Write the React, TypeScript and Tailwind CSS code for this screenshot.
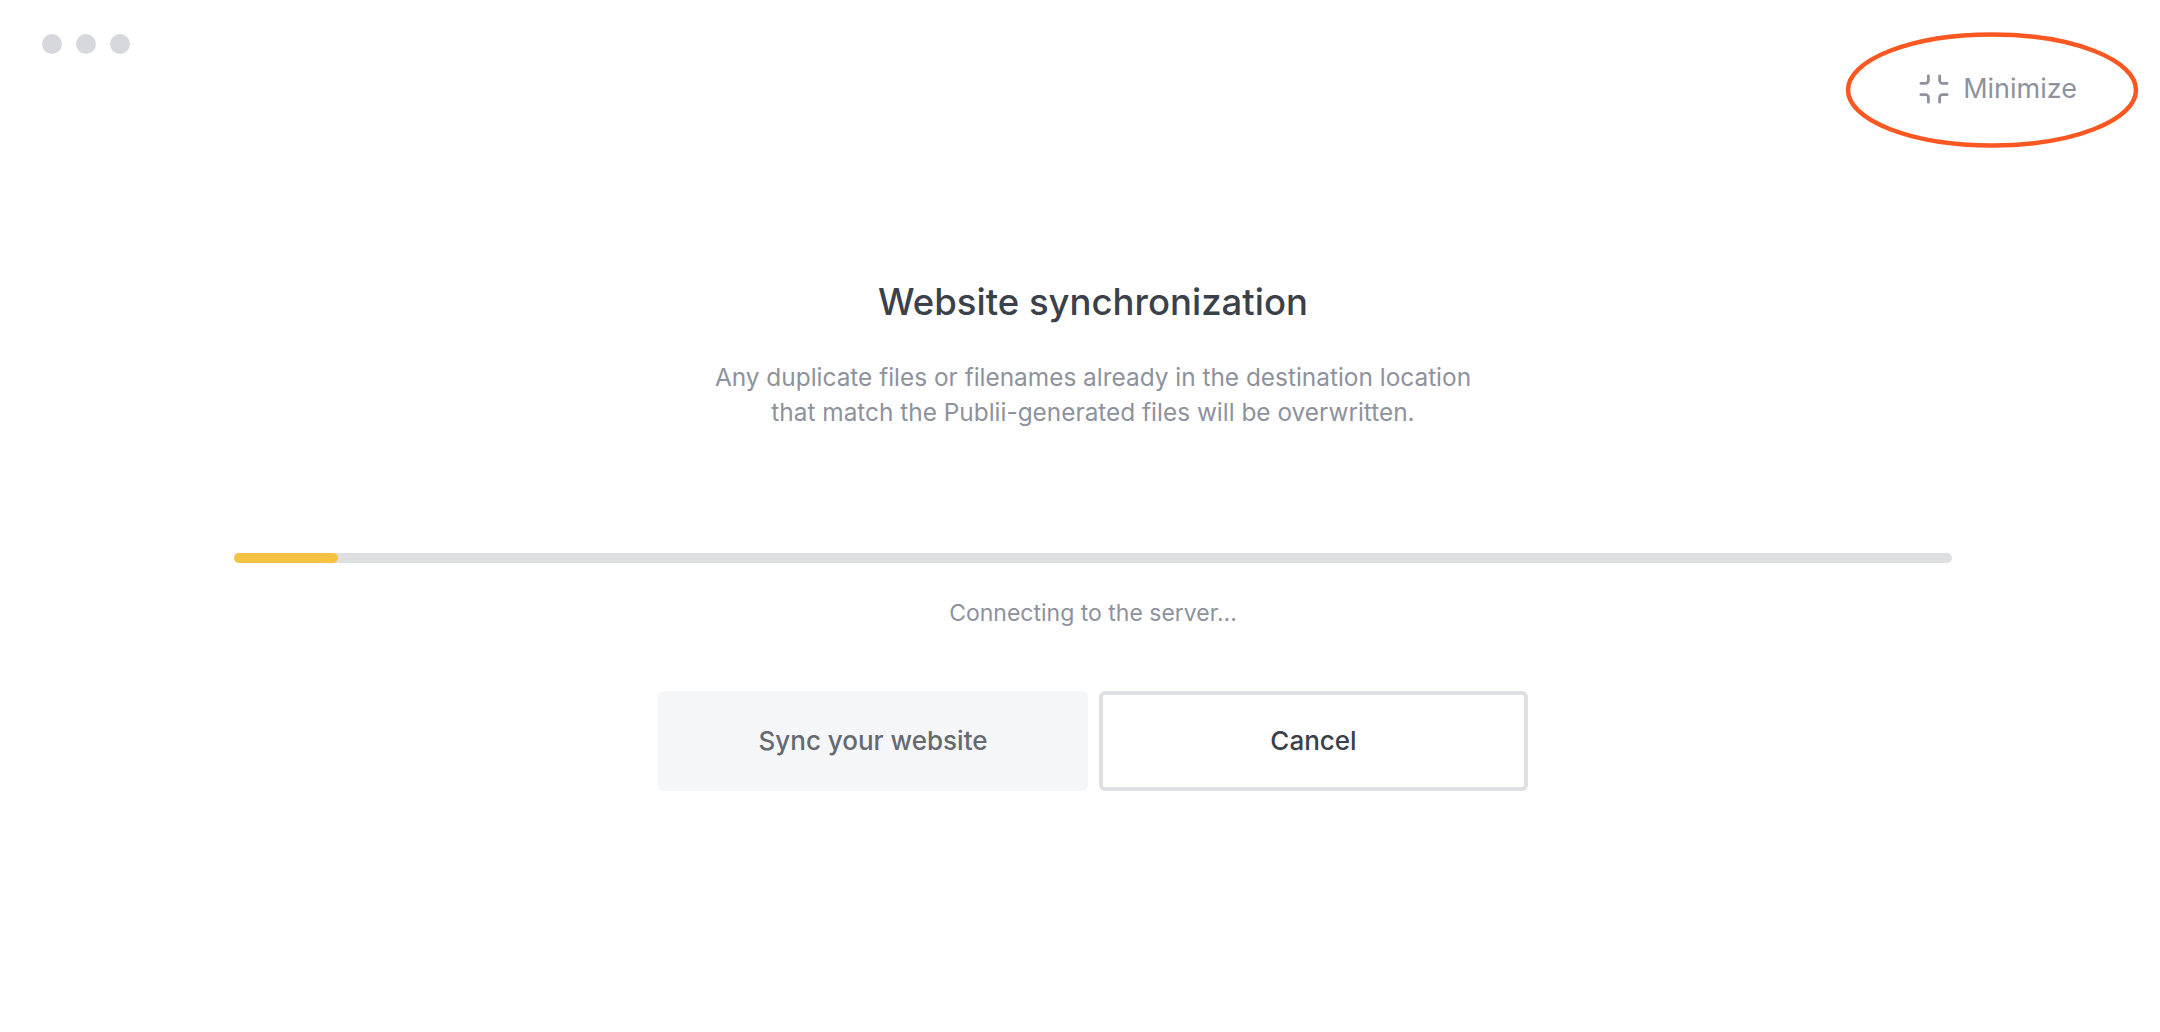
import React from "react";

const App: React.FC = () => (
  <div className="relative h-[1032px] overflow-hidden bg-white font-['Inter',sans-serif] text-[#8e929d]">
    {/* Window controls + minimize */}
    <header className="flex h-[170px] items-start justify-between pl-[42px] pr-[60px]">
      <div className="mt-[34px] flex gap-[14px]">
        <span className="h-5 w-5 rounded-full bg-[#d7d8dd]" />
        <span className="h-5 w-5 rounded-full bg-[#d7d8dd]" />
        <span className="h-5 w-5 rounded-full bg-[#d7d8dd]" />
      </div>
      <button className="mr-[23px] mt-[72px] flex items-center gap-[14px] text-[27px] leading-[34px]">
        <svg width="30" height="30" viewBox="0 0 32 32" fill="none" stroke="#8e929d" strokeWidth="3" strokeLinecap="round">
          <path d="M10 2v5a3 3 0 0 1-3 3H2" />
          <path d="M22 2v5a3 3 0 0 0 3 3h5" />
          <path d="M10 30v-5a3 3 0 0 0-3-3H2" />
          <path d="M22 30v-5a3 3 0 0 1 3-3h5" />
        </svg>
        Minimize
      </button>
    </header>

    <main className="flex flex-col items-center pl-[26px]">
      <h1 className="mt-[108px] text-[36.5px] font-medium leading-[48px] text-[#3a414a]">Website synchronization</h1>
      <p className="mt-[34px] text-center text-[24.4px] leading-[34.5px]">
        Any duplicate files or filenames already in the destination location
        <br />
        that match the Publii-generated files will be overwritten.
      </p>

      <div className="mt-[124px] h-[10px] w-[1718px] rounded-[5px] bg-[#dedfe3]">
        <div className="h-full w-[104px] rounded-[5px] bg-[#f6c244]" />
      </div>
      <p className="mt-[35px] text-[23px] leading-[30px]">Connecting to the server...</p>

      <div className="mt-[63px] flex gap-[11px]">
        <button className="h-[100px] w-[430px] rounded-[6px] bg-[#f5f6f8] pb-[2px] text-[26px] font-medium text-[#66696f]">Sync your website</button>
        <button className="h-[100px] w-[429px] rounded-[6px] border-4 border-[#dfe0e4] bg-white pb-[2px] text-[26px] font-medium text-[#3a414a]">Cancel</button>
      </div>
    </main>

    {/* Annotation ring around minimize */}
    <svg className="absolute left-[1840px] top-[28px] pointer-events-none" width="304" height="124" viewBox="0 0 304 124" fill="none">
      <ellipse cx="152" cy="62" rx="144" ry="55.5" stroke="#fb5722" strokeWidth="4.5" />
    </svg>
  </div>
);

export default App;
